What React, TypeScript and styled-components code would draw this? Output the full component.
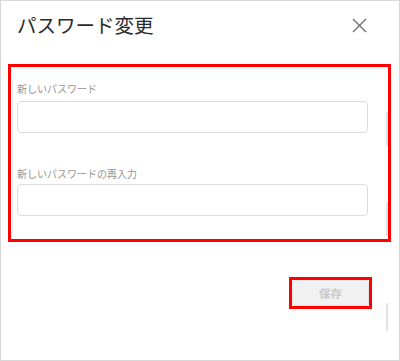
import React from "react";
import styled, { createGlobalStyle } from "styled-components";

const Global = createGlobalStyle`
  html, body { margin: 0; padding: 0; background: #fff; }
  body { font-family: "Noto Sans CJK JP", "Noto Sans", sans-serif; }
  * { box-sizing: border-box; }
`;

const Dialog = styled.div`
  position: relative;
  width: 400px;
  height: 361px;
  border: 1px solid #d8d8d8;
  background: #fff;
  display: flex;
  flex-direction: column;
`;

const Header = styled.div`
  height: 48px;
  display: flex;
  align-items: center;
  justify-content: space-between;
  padding: 0 32px 0 16px;
`;

const Title = styled.h1`
  margin: 0;
  font-size: 19.5px;
  font-weight: 400;
  color: #2b2b2b;
  line-height: 24px;
  letter-spacing: 0;
`;

const CloseButton = styled.button`
  width: 16px;
  height: 16px;
  padding: 0;
  border: none;
  background: none;
  display: flex;
  align-items: center;
  justify-content: center;
  cursor: pointer;
`;

const Highlight = styled.div<{ $pad?: string }>`
  border: 3px solid #ff0000;
  padding: ${(p) => p.$pad || "0"};
`;

const FormArea = styled(Highlight)`
  margin: 15px 8px 0 7px;
  height: 178px;
  display: flex;
  flex-direction: column;
`;

const Field = styled.div<{ $top: number }>`
  display: flex;
  flex-direction: column;
  margin-top: ${(p) => p.$top}px;
`;

const Label = styled.label<{ $gap: number }>`
  font-size: 10px;
  line-height: 13px;
  color: #959595;
  margin-bottom: ${(p) => p.$gap}px;
`;

const Input = styled.input`
  width: 351px;
  height: 32px;
  border: 1px solid #dcdcdc;
  border-radius: 4px;
  background: #fff;
  outline: none;
`;

const Footer = styled.div`
  display: flex;
  justify-content: flex-end;
  padding: 35px 27px 0 0;
`;

const SaveButton = styled.button`
  width: 77px;
  height: 26px;
  border: 1px solid #e6e6e6;
  border-radius: 3px;
  background: #f1f1f1;
  color: #c9c9c9;
  font-family: "Noto Sans CJK JP", sans-serif;
  font-size: 11.5px;
  font-weight: 700;
  padding: 0;
  display: block;
`;

const ScrollThumb = styled.div<{ $top: number; $h: number }>`
  position: absolute;
  left: 385px;
  top: ${(p) => p.$top}px;
  width: 2px;
  height: ${(p) => p.$h}px;
  background: #e4e4e4;
`;

export default function App() {
  return (
    <>
      <Global />
      <Dialog>
        <Header>
          <Title>パスワード変更</Title>
          <CloseButton aria-label="閉じる">
            <svg width="15" height="15" viewBox="0 0 15 15">
              <path d="M1 1 L14 14 M14 1 L1 14" stroke="#6e6e6e" strokeWidth="1.4" fill="none" />
            </svg>
          </CloseButton>
        </Header>
        <FormArea $pad="0 0 0 6px">
          <Field $top={15}>
            <Label $gap={6}>新しいパスワード</Label>
            <Input type="password" />
          </Field>
          <Field $top={34}>
            <Label $gap={4}>新しいパスワードの再入力</Label>
            <Input type="password" />
          </Field>
        </FormArea>
        <Footer>
          <Highlight>
            <SaveButton>保存</SaveButton>
          </Highlight>
        </Footer>
        <ScrollThumb $top={111} $h={34} />
        <ScrollThumb $top={201} $h={34} />
        <ScrollThumb $top={302} $h={28} />
      </Dialog>
    </>
  );
}
